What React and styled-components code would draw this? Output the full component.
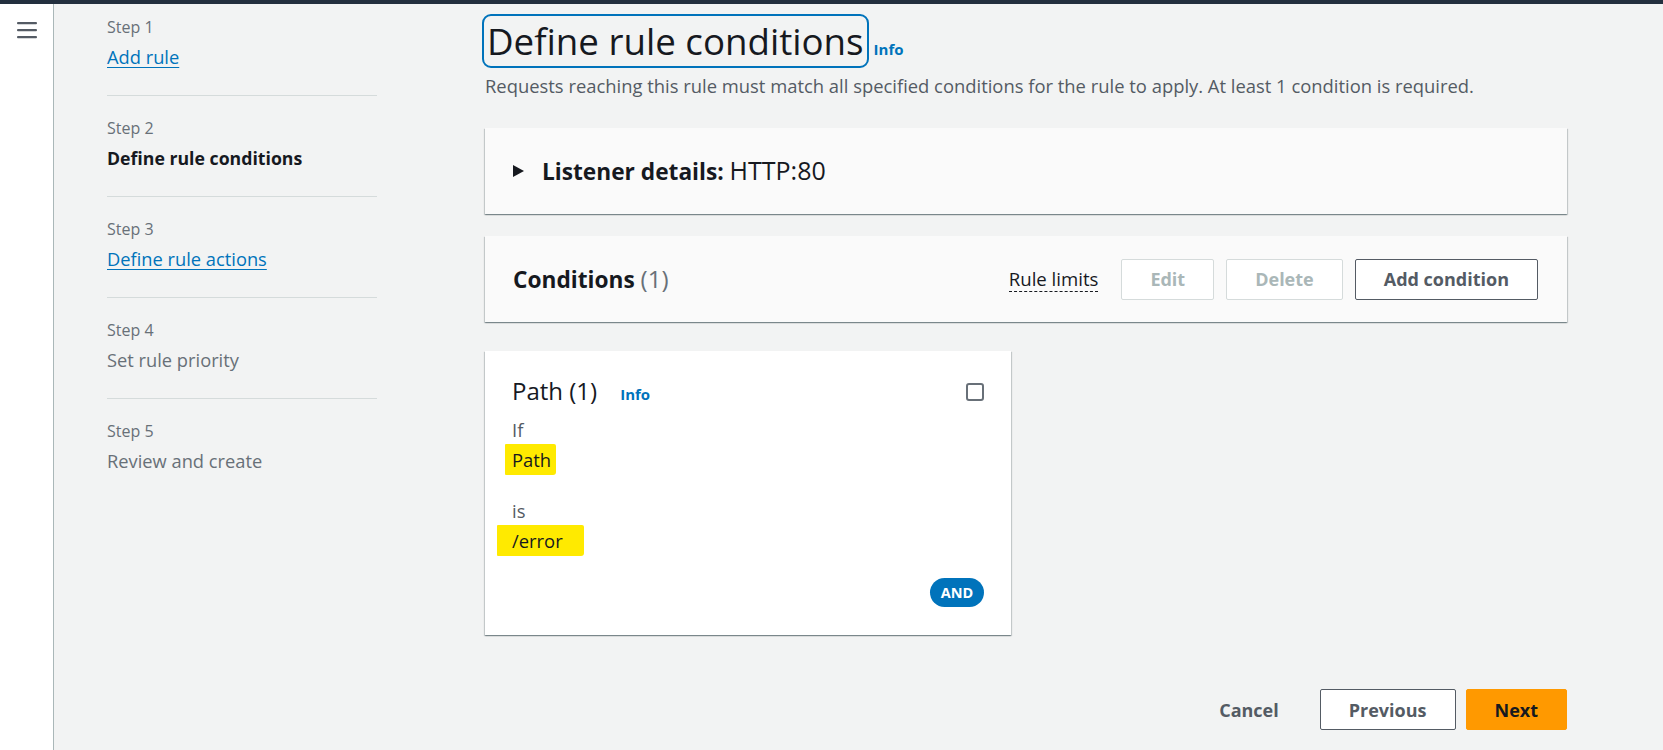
import React from 'react'
import styled, { createGlobalStyle } from 'styled-components'

const steps = [
  { label: 'Step 1', title: 'Add rule', state: 'link' },
  { label: 'Step 2', title: 'Define rule conditions', state: 'current' },
  { label: 'Step 3', title: 'Define rule actions', state: 'link' },
  { label: 'Step 4', title: 'Set rule priority', state: 'idle' },
  { label: 'Step 5', title: 'Review and create', state: 'idle' },
]

function App() {
  return (
    <Shell>
      <GlobalStyle />
      <TopBar />
      <Body>
        <SideRail>
          <svg width="20" height="17" viewBox="0 0 20 17">
            <rect x="0" y="0" width="20" height="2.2" rx="1" fill="#545b64" />
            <rect x="0" y="7" width="20" height="2.2" rx="1" fill="#545b64" />
            <rect x="0" y="14" width="20" height="2.2" rx="1" fill="#545b64" />
          </svg>
        </SideRail>

        <StepNav>
          {steps.map((s, i) => (
            <StepItem key={i} $first={i === 0} $last={i === steps.length - 1}>
              <StepLabel>{s.label}</StepLabel>
              <StepTitle $state={s.state}>{s.title}</StepTitle>
            </StepItem>
          ))}
        </StepNav>

        <Main>
          <TitleRow>
            <h1>Define rule conditions</h1>
            <InfoLink>Info</InfoLink>
          </TitleRow>
          <Description>
            Requests reaching this rule must match all specified conditions for the rule to apply. At least 1 condition is required.
          </Description>

          <Panel>
            <Caret width="11" height="12" viewBox="0 0 11 12">
              <polygon points="0,0 11,6 0,12" fill="#16191f" />
            </Caret>
            <PanelTitle>
              Listener details: <span className="value">HTTP:80</span>
            </PanelTitle>
          </Panel>

          <Panel $gap>
            <PanelTitle>
              Conditions <span className="count">(1)</span>
            </PanelTitle>
            <Actions>
              <RuleLimits>Rule limits</RuleLimits>
              <Button disabled>Edit</Button>
              <Button disabled>Delete</Button>
              <Button>Add condition</Button>
            </Actions>
          </Panel>

          <ConditionCard>
            <CardHeader>
              <CardTitle>
                <span>Path (1)</span>
                <InfoLink>Info</InfoLink>
              </CardTitle>
              <Checkbox />
            </CardHeader>
            <Field>If</Field>
            <Value><Marker $left={7} $right={5}>Path</Marker></Value>
            <Field $spaced>is</Field>
            <Value><Marker $left={15} $right={21}>/error</Marker></Value>
            <Badge>AND</Badge>
          </ConditionCard>

          <Footer>
            <Button $plain>Cancel</Button>
            <Button>Previous</Button>
            <Button $primary>Next</Button>
          </Footer>
        </Main>
      </Body>
    </Shell>
  )
}

const GlobalStyle = createGlobalStyle`
  html, body {
    margin: 0;
    padding: 0;
    background: #f2f3f3;
    font-family: "Open Sans", "Noto Sans", sans-serif;
    color: #16191f;
  }
  body {
    height: 750px;
    overflow: hidden;
  }
`

const Shell = styled.div`
  display: flex;
  flex-direction: column;
  height: 750px;
`

const TopBar = styled.div`
  height: 4px;
  background: #232f3e;
  flex-shrink: 0;
`

const Body = styled.div`
  flex: 1;
  display: flex;
`

const SideRail = styled.div`
  width: 54px;
  flex-shrink: 0;
  background: #ffffff;
  border-right: 1px solid #aab7b8;
  padding: 18px 0 0 17px;
  box-sizing: border-box;
`

const StepNav = styled.nav`
  width: 270px;
  margin-left: 53px;
  flex-shrink: 0;
`

const StepItem = styled.div`
  padding: ${p => (p.$first ? '13px' : '22px')} 0 26px;
  border-bottom: ${p => (p.$last ? 'none' : '1px solid #d5dbdb')};
`

const StepLabel = styled.div`
  font-size: 16px;
  line-height: 20px;
  color: #687078;
  margin-bottom: 8px;
`

const StepTitle = styled.div`
  font-size: ${p => (p.$state === 'current' ? '17.7px' : '18.3px')};
  line-height: 24px;
  color: ${p => (p.$state === 'link' ? '#0073bb' : p.$state === 'current' ? '#16191f' : '#687078')};
  font-weight: ${p => (p.$state === 'current' ? 700 : 400)};
  text-decoration: ${p => (p.$state === 'link' ? 'underline' : 'none')};
  text-underline-offset: 3px;
`

const Main = styled.main`
  flex: 1;
  margin-left: 108px;
  margin-right: 96px;
  padding-top: 15px;
  min-width: 0;
`

const TitleRow = styled.div`
  display: flex;
  align-items: baseline;
  gap: 10px;

  h1 {
    margin: 0 0 0 2px;
    font-size: 36.7px;
    line-height: 44px;
    font-weight: 400;
    color: #16191f;
    outline: 2px solid #0073bb;
    outline-offset: 3px;
    border-radius: 4px;
  }
`

const InfoLink = styled.span`
  font-size: 15px;
  font-weight: 700;
  color: #0073bb;
`

const Description = styled.p`
  margin: 11px 0 0;
  font-size: 18.4px;
  line-height: 24px;
  color: #545b64;
`

const Panel = styled.section`
  margin-top: ${p => (p.$gap ? '22px' : '30px')};
  height: 86px;
  box-sizing: border-box;
  padding: 0 29px 0 28px;
  display: flex;
  align-items: center;
  background: #fafafa;
  box-shadow: 0 1px 1px 0 rgba(0, 28, 36, 0.3), 1px 1px 1px 0 rgba(0, 28, 36, 0.15), -1px 1px 1px 0 rgba(0, 28, 36, 0.15);
`

const Caret = styled.svg`
  margin-right: 18px;
  flex-shrink: 0;
`

const PanelTitle = styled.h2`
  margin: 0;
  font-size: 22.7px;
  line-height: 30px;
  font-weight: 700;
  color: #16191f;

  .value {
    font-weight: 400;
    font-size: 25px;
  }
  .count {
    font-weight: 400;
    font-size: 24px;
    color: #687078;
  }
`

const Actions = styled.div`
  margin-left: auto;
  display: flex;
  align-items: center;
  gap: 12px;
`

const RuleLimits = styled.span`
  font-size: 18.6px;
  line-height: 24px;
  color: #16191f;
  border-bottom: 1px dashed #16191f;
  margin-right: 11px;
`

const Button = styled.button`
  height: 41px;
  padding: 0 28px;
  font-family: inherit;
  font-size: 18px;
  font-weight: 700;
  border-radius: 2px;
  border: 1px solid ${p => (p.$plain ? 'transparent' : p.$primary ? '#ff9900' : '#545b64')};
  background: ${p => (p.$plain ? 'transparent' : p.$primary ? '#ff9900' : '#ffffff')};
  color: ${p => (p.$primary ? '#16191f' : '#545b64')};
  cursor: pointer;

  &:disabled {
    border-color: #d5dbdb;
    color: #aab7b8;
    cursor: default;
  }
`

const ConditionCard = styled.section`
  margin-top: 29px;
  width: 526px;
  box-sizing: border-box;
  padding: 24px 27px 28px;
  background: #ffffff;
  display: flex;
  flex-direction: column;
  box-shadow: 0 1px 1px 0 rgba(0, 28, 36, 0.3), 1px 1px 1px 0 rgba(0, 28, 36, 0.15), -1px 1px 1px 0 rgba(0, 28, 36, 0.15);
`

const CardHeader = styled.div`
  display: flex;
  align-items: center;
  justify-content: space-between;
  height: 34px;
`

const CardTitle = styled.h3`
  margin: 0;
  display: flex;
  align-items: baseline;
  gap: 23px;
  font-size: 24px;
  line-height: 34px;
  font-weight: 400;
  color: #16191f;
`

const Checkbox = styled.span`
  width: 14px;
  height: 14px;
  border: 2px solid #687078;
  border-radius: 3px;
  background: #ffffff;
`

const Field = styled.div`
  margin-top: ${p => (p.$spaced ? '27px' : '9px')};
  font-size: 18.4px;
  line-height: 24px;
  color: #545b64;
`

const Value = styled.div`
  margin-top: 6px;
  font-size: 18.4px;
  line-height: 24px;
  color: #16191f;
`

const Marker = styled.span`
  background: #ffea00;
  margin-left: -${p => p.$left}px;
  padding: 3px ${p => p.$right}px 3px ${p => p.$left}px;
  border-radius: 1px 2px 3px 1px;
`

const Badge = styled.span`
  align-self: flex-end;
  margin-top: 25px;
  width: 54px;
  height: 29px;
  border-radius: 15px;
  background: #0073bb;
  color: #ffffff;
  font-size: 14.5px;
  font-weight: 700;
  display: flex;
  align-items: center;
  justify-content: center;
`

const Footer = styled.div`
  margin-top: 54px;
  display: flex;
  justify-content: flex-end;
  gap: 10px;

  button:first-child {
    margin-right: 2px;
  }
`

export default App
